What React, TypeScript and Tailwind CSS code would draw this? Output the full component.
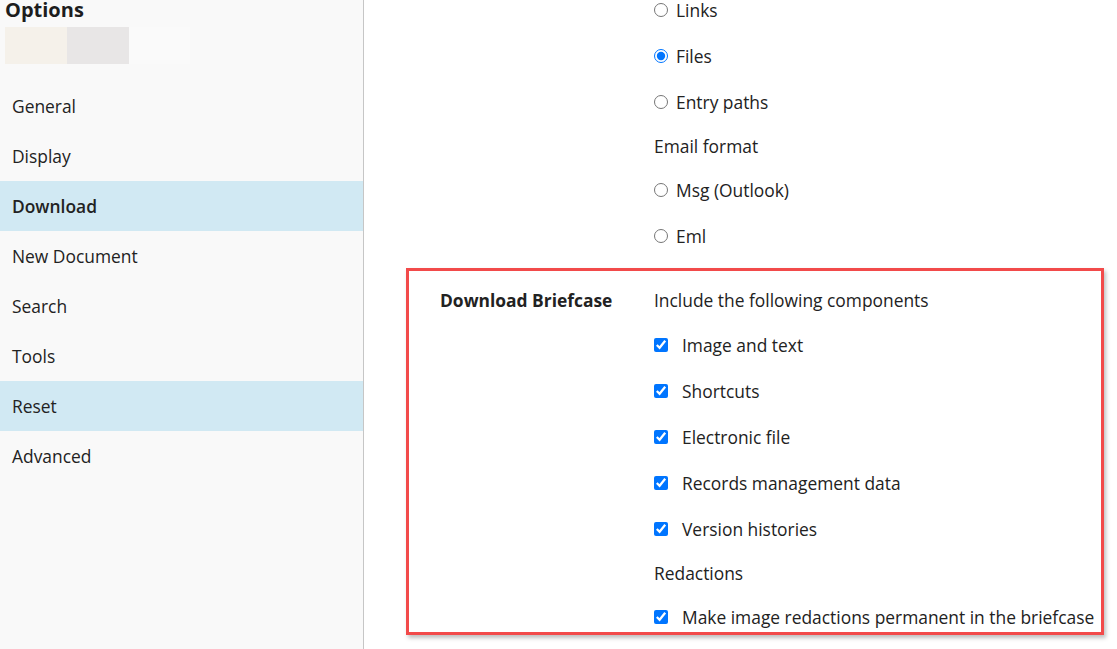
import React from "react";

const navItems = [
  { label: "General", active: false },
  { label: "Display", active: false },
  { label: "Download", active: true, bold: true },
  { label: "New Document", active: false },
  { label: "Search", active: false },
  { label: "Tools", active: false },
  { label: "Reset", active: true },
  { label: "Advanced", active: false },
];

function Radio({ label, checked }: { label: string; checked?: boolean }) {
  return (
    <label className="flex items-center h-[46px] shrink-0">
      <input type="radio" name="dl" defaultChecked={checked} className="m-0 w-[14px] h-[14px]" />
      <span className="ml-[8px]">{label}</span>
    </label>
  );
}

function Check({ label, last }: { label: string; last?: boolean }) {
  return (
    <label className={`flex shrink-0 ${last ? "items-end h-[38px] pb-[3px]" : "items-center h-[46px]"}`}>
      <input type="checkbox" defaultChecked className={`m-0 w-[14px] h-[14px] ${last ? "mb-[5px]" : ""}`} />
      <span className="ml-[14px] leading-[24px]">{label}</span>
    </label>
  );
}

export default function App() {
  return (
    <div
      className="flex w-[1117px] h-[649px] overflow-hidden bg-white text-[#222] text-[17.4px]"
      style={{ fontFamily: '"Open Sans", "Noto Sans", sans-serif' }}
    >
      <aside className="w-[364px] shrink-0 bg-[#f9f9f9] border-r border-[#c6c6c6] flex flex-col">
        <div className="pl-[5px] text-[20px] font-bold leading-[22px] mt-[-1px] text-[#1d1d1d]">Options</div>
        <div className="flex ml-[5px] mt-[6px] h-[37px]">
          <div className="w-[62px] bg-[#f5f1ea]" />
          <div className="w-[62px] bg-[#e8e6e6]" />
          <div className="w-[61px] bg-[#fafafa]" />
        </div>
        <nav className="mt-[17px] flex flex-col">
          {navItems.map((n) => (
            <div
              key={n.label}
              className={`h-[50px] flex items-center pl-[12px] ${n.active ? "bg-[#d1e9f3]" : ""} ${n.bold ? "font-semibold" : ""}`}
            >
              {n.label}
            </div>
          ))}
        </nav>
      </aside>
      <main className="flex-1 relative">
        <div className="pl-[290px] mt-[-13px] flex flex-col">
          <Radio label="Links" />
          <Radio label="Files" checked />
          <Radio label="Entry paths" />
          <div className="h-[42px] flex items-center">Email format</div>
          <Radio label="Msg (Outlook)" />
          <Radio label="Eml" />
        </div>
        <div className="ml-[42px] mt-[9px] w-[698px] border-[3px] border-[#f24a4a] shadow-[2px_3px_4px_rgba(0,0,0,0.25)] flex">
          <div className="w-[245px] pl-[31px] pt-[16px] font-bold leading-[26px]">Download Briefcase</div>
          <div className="flex flex-col pt-[16px]">
            <div className="leading-[26px] mb-[9px]">Include the following components</div>
            <Check label="Image and text" />
            <Check label="Shortcuts" />
            <Check label="Electronic file" />
            <Check label="Records management data" />
            <Check label="Version histories" />
            <div className="h-[42px] flex items-center shrink-0">Redactions</div>
            <Check label="Make image redactions permanent in the briefcase" last />
          </div>
        </div>
      </main>
    </div>
  );
}
